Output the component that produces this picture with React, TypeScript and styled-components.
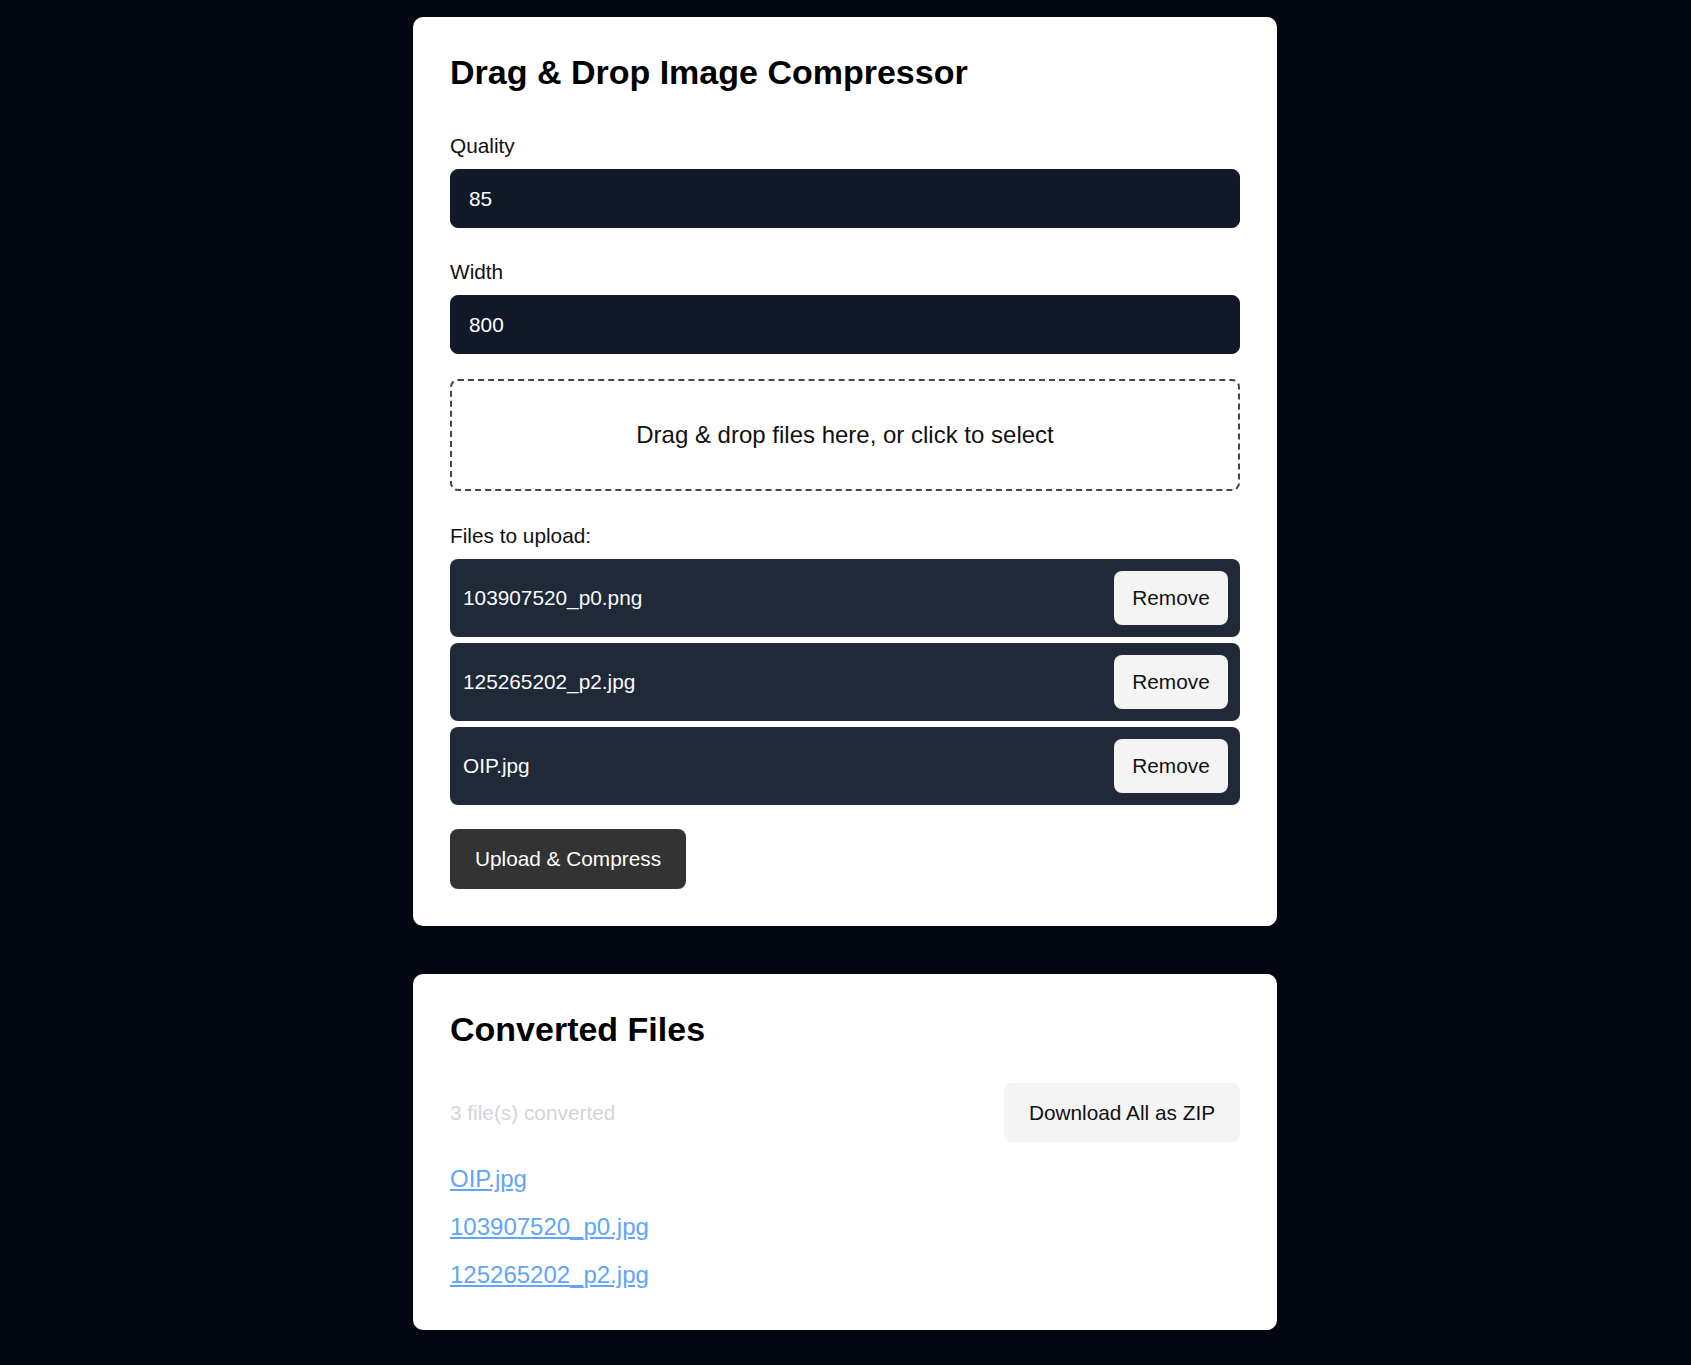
import React, { useState } from "react";
import styled, { createGlobalStyle } from "styled-components";

const GlobalStyle = createGlobalStyle`
  html, body {
    margin: 0;
    padding: 0;
    background: #030712;
  }
  body {
    font-family: "Liberation Sans", Arial, Helvetica, sans-serif;
    font-size: 20.8px;
    color: #111111;
  }
  * { box-sizing: border-box; }
`;

const Page = styled.main`
  min-height: 1365px;
  padding: 17px 1px 36px 0;
  display: flex;
  flex-direction: column;
  align-items: center;
  gap: 48px;
`;

const Card = styled.section<{ $padBottom?: number }>`
  width: 864px;
  background: #ffffff;
  border-radius: 10px;
  padding: 35px 37px ${(p) => p.$padBottom ?? 37}px;
  display: flex;
  flex-direction: column;
`;

const Title = styled.h2<{ $gap: number }>`
  margin: 0 0 ${(p) => p.$gap}px;
  font-size: 34px;
  line-height: 40px;
  font-weight: 700;
  color: #000000;
`;

const Fields = styled.div`
  display: flex;
  flex-direction: column;
  gap: 32px;
`;

const Field = styled.div`
  display: flex;
  flex-direction: column;
`;

const Label = styled.label`
  display: block;
  font-size: 20.8px;
  line-height: 24px;
  margin-bottom: 11px;
  color: #111111;
`;

const Input = styled.input`
  width: 100%;
  height: 59px;
  padding: 0 18px;
  border: 1px solid #111827;
  border-radius: 8px;
  background: #111827;
  color: #ffffff;
  font-family: inherit;
  font-size: 20.8px;
  outline: none;
`;

const DropZone = styled.div`
  margin-top: 25px;
  height: 112px;
  border: 2px dashed #3f4654;
  border-radius: 8px;
  display: flex;
  align-items: center;
  justify-content: center;
  font-size: 24px;
  color: #111111;
  cursor: pointer;
`;

const SectionLabel = styled.p`
  margin: 33px 0 11px;
  font-size: 20.8px;
  line-height: 24px;
`;

const FileList = styled.ul`
  list-style: none;
  margin: 0;
  padding: 0;
  display: flex;
  flex-direction: column;
  gap: 6px;
`;

const FileRow = styled.li`
  display: flex;
  align-items: center;
  justify-content: space-between;
  padding: 12px 12px 12px 13px;
  background: #1f2937;
  border-radius: 8px;
  color: #f9fafb;
  font-size: 20.8px;
  line-height: 24px;
`;

const Button = styled.button<{ $variant: "light" | "dark" }>`
  font-family: inherit;
  font-size: 20.8px;
  line-height: 24px;
  border: none;
  border-radius: 8px;
  cursor: pointer;
  background: ${(p) => (p.$variant === "dark" ? "#333333" : "#f4f4f4")};
  color: ${(p) => (p.$variant === "dark" ? "#ffffff" : "#111111")};
`;

const RemoveButton = styled(Button)`
  width: 114px;
  height: 54px;
  padding: 0;
`;

const UploadButton = styled(Button)`
  align-self: flex-start;
  margin-top: 24px;
  width: 236px;
  height: 60px;
  padding: 0;
`;

const ActionRow = styled.div`
  display: flex;
  align-items: center;
  justify-content: space-between;
`;

const Muted = styled.span`
  color: #d1d5db;
  font-size: 20.8px;
`;

const DownloadButton = styled(Button)`
  width: 236px;
  height: 59px;
  padding: 0;
`;

const LinkList = styled.div`
  margin-top: 23px;
  display: flex;
  flex-direction: column;
  align-items: flex-start;
  gap: 20px;
`;

const FileLink = styled.a`
  font-size: 24px;
  line-height: 28px;
  color: #60a5fa;
  text-decoration: underline;
`;

export default function App() {
  const [files, setFiles] = useState(["103907520_p0.png", "125265202_p2.jpg", "OIP.jpg"]);
  const converted = ["OIP.jpg", "103907520_p0.jpg", "125265202_p2.jpg"];

  return (
    <>
      <GlobalStyle />
      <Page>
        <Card>
          <Title $gap={42}>Drag &amp; Drop Image Compressor</Title>
          <Fields>
            <Field>
              <Label htmlFor="quality">Quality</Label>
              <Input id="quality" type="text" defaultValue="85" />
            </Field>
            <Field>
              <Label htmlFor="width">Width</Label>
              <Input id="width" type="text" defaultValue="800" />
            </Field>
          </Fields>
          <DropZone>Drag &amp; drop files here, or click to select</DropZone>
          <SectionLabel>Files to upload:</SectionLabel>
          <FileList>
            {files.map((f) => (
              <FileRow key={f}>
                <span>{f}</span>
                <RemoveButton $variant="light" onClick={() => setFiles(files.filter((x) => x !== f))}>
                  Remove
                </RemoveButton>
              </FileRow>
            ))}
          </FileList>
          <UploadButton $variant="dark">Upload &amp; Compress</UploadButton>
        </Card>
        <Card $padBottom={41}>
          <Title $gap={34}>Converted Files</Title>
          <ActionRow>
            <Muted>3 file(s) converted</Muted>
            <DownloadButton $variant="light">Download All as ZIP</DownloadButton>
          </ActionRow>
          <LinkList>
            {converted.map((c) => (
              <FileLink key={c} href="#">
                {c}
              </FileLink>
            ))}
          </LinkList>
        </Card>
      </Page>
    </>
  );
}
